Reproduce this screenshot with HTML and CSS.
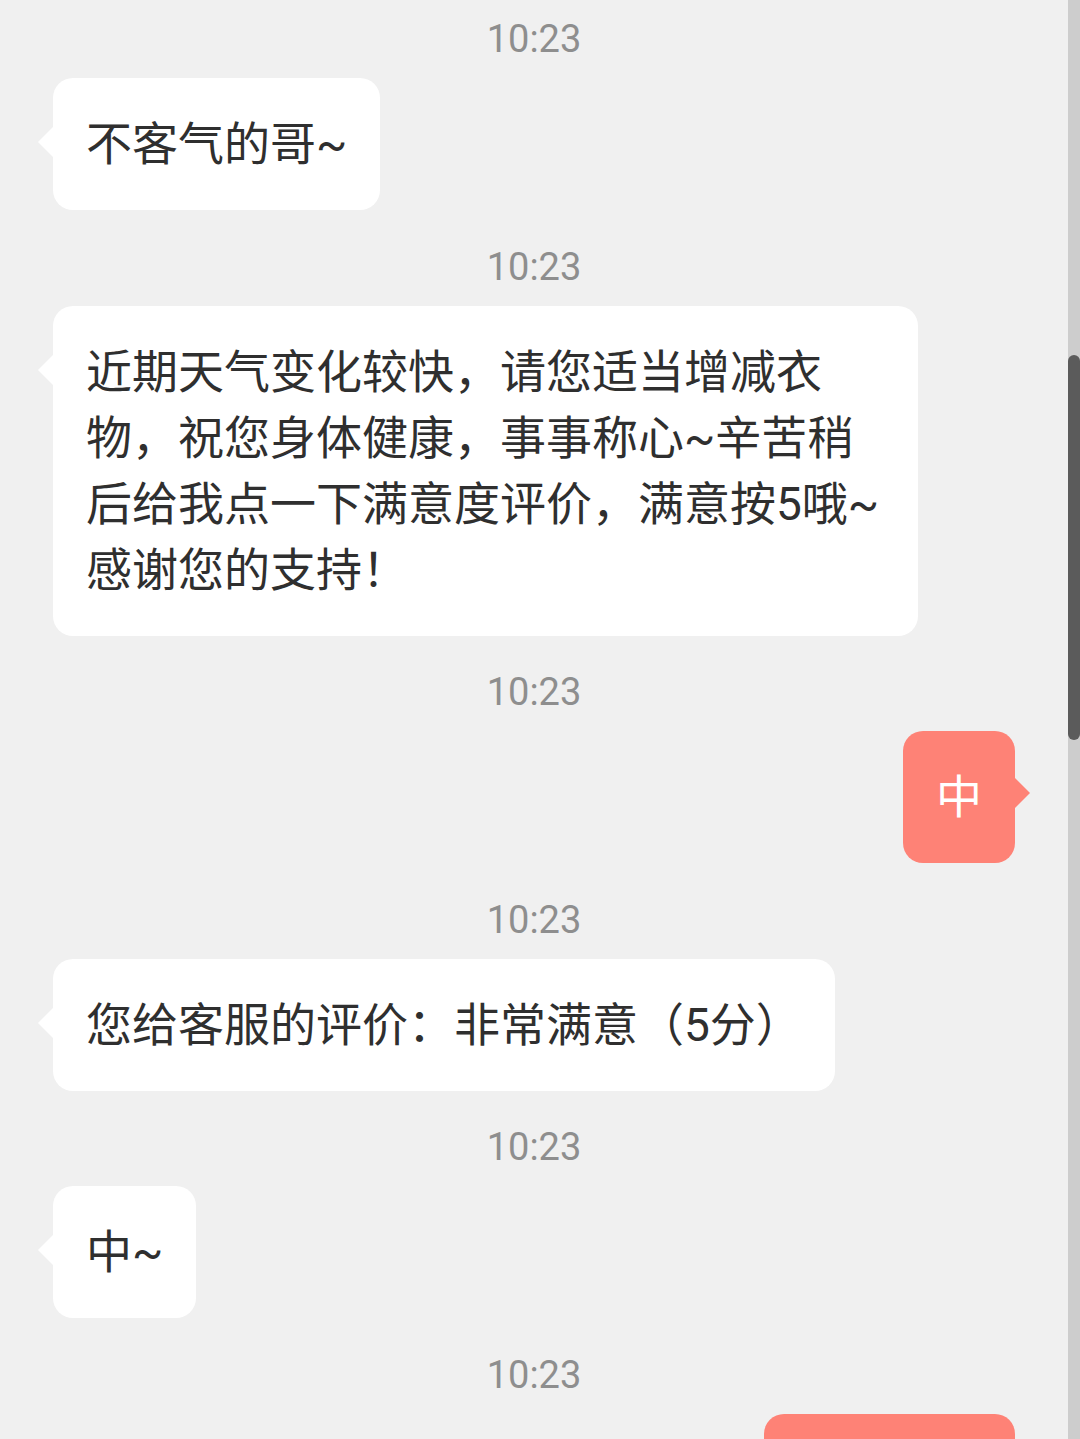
FILE: index.html
```html
<!DOCTYPE html>
<html lang="zh-CN">
<head>
  <meta charset="UTF-8" />
  <meta name="viewport" content="width=device-width, initial-scale=1.0" />
  <title>在线客服</title>
  <link rel="stylesheet" href="styles.css">
</head>
<body>

  <div class="chat">
    <div class="time">10:23</div>
    <div class="row left">
      <div class="bubble">不客气的哥~</div>
    </div>

    <div class="time">10:23</div>
    <div class="row left">
      <div class="bubble">近期天气变化较快，请您适当增减衣物，祝您身体健康，事事称心~辛苦稍后给我点一下满意度评价，满意按5哦~感谢您的支持！</div>
    </div>

    <div class="time">10:23</div>
    <div class="row right">
      <div class="bubble">中</div>
    </div>

    <div class="time">10:23</div>
    <div class="row left">
      <div class="bubble">您给客服的评价：非常满意（5分）</div>
    </div>

    <div class="time">10:23</div>
    <div class="row left">
      <div class="bubble">中~</div>
    </div>

    <div class="time">10:23</div>
    <div class="row right">
      <!-- 下一条消息，超出屏幕 -->
      <div class="bubble blank"></div>
    </div>
  </div>

  <!-- 滚动条 -->
  <div class="scrollbar"><div class="thumb"></div></div>

</body>
</html>
```

FILE: styles.css
```css
body {
  margin: 0;
  background: #f0f0f0;
  font-family: Roboto, "Noto Sans CJK SC", sans-serif;
  height: 1439px;
  overflow: hidden;
}
.chat {
  width: 1068px;
  padding: 19px 53px 0;
  box-sizing: border-box;
  display: flex;
  flex-direction: column;
}
.time {
  height: 40px;
  line-height: 40px;
  margin-bottom: 19px;
  text-align: center;
  font-size: 38px;
  color: #8e8e8e;
}
.row {
  display: flex;
  margin-bottom: 36.5px;
}
.row.right {
  justify-content: flex-end;
}
.bubble {
  position: relative;
  max-width: 865px;
  box-sizing: border-box;
  padding: 33px;
  border-radius: 20px;
  background: #fff;
  color: #2f2f2f;
  font-size: 46px;
  line-height: 66px;
}
.bubble.blank {
  width: 251px;
  height: 132px;
}
.left .bubble::before {
  content: "";
  position: absolute;
  left: -15px;
  top: 49px;
  border-top: 15px solid transparent;
  border-bottom: 15px solid transparent;
  border-right: 15px solid #fff;
}
.right .bubble {
  background: #fe8276;
  color: #fff;
}
.right .bubble::after {
  content: "";
  position: absolute;
  right: -15px;
  top: 47px;
  border-top: 15px solid transparent;
  border-bottom: 15px solid transparent;
  border-left: 15px solid #fe8276;
}
.scrollbar {
  position: fixed;
  top: 0;
  right: 0;
  width: 12px;
  height: 100%;
  background: #cdcdcd;
}
.thumb {
  margin-top: 355px;
  height: 385px;
  border-radius: 6px;
  background: #5b5b5b;
}
```
